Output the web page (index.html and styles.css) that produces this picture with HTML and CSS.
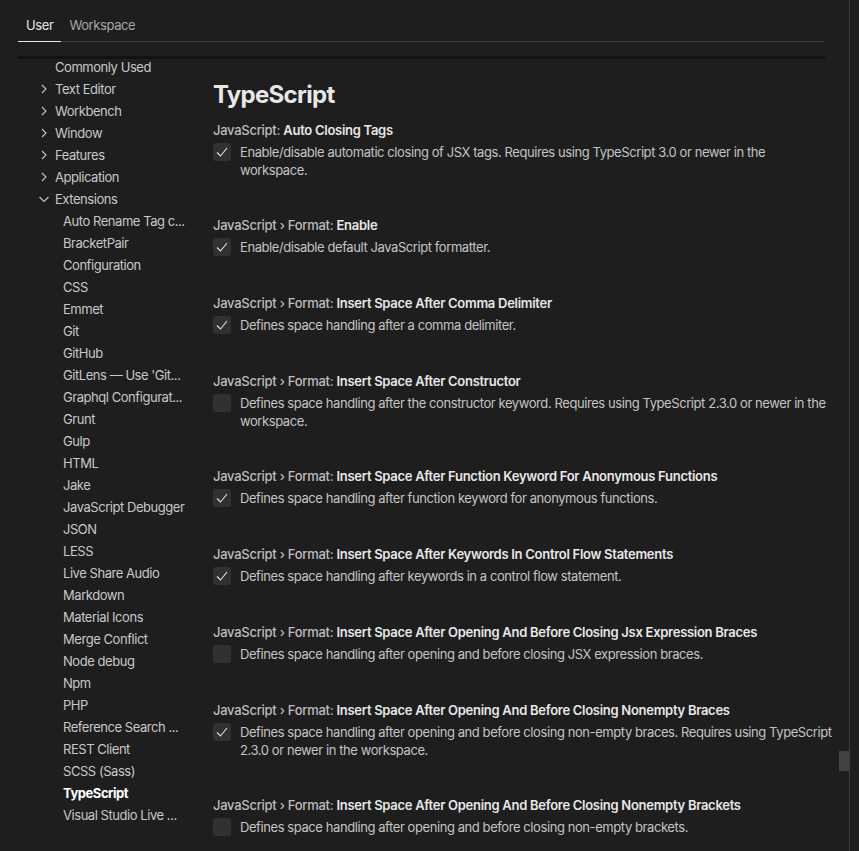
FILE: index.html
```html
<!DOCTYPE html>
<html lang="en">
<head>
<meta charset="utf-8">
<title>Settings</title>
<link rel="stylesheet" href="styles.css">
</head>
<body>
<div class="editor">
  <div class="tabs">
    <div class="tab active">User</div>
    <div class="tab">Workspace</div>
  </div>
  <div class="scroll-shadow"></div>
  <div class="main">
    <nav class="toc">
      <div class="toc-row"><span class="toc-label">Commonly Used</span></div>
      <div class="toc-row"><svg class="chev" viewBox="0 0 16 16"><polyline points="6,4 10,8 6,12"/></svg><span class="toc-label">Text Editor</span></div>
      <div class="toc-row"><svg class="chev" viewBox="0 0 16 16"><polyline points="6,4 10,8 6,12"/></svg><span class="toc-label">Workbench</span></div>
      <div class="toc-row"><svg class="chev" viewBox="0 0 16 16"><polyline points="6,4 10,8 6,12"/></svg><span class="toc-label">Window</span></div>
      <div class="toc-row"><svg class="chev" viewBox="0 0 16 16"><polyline points="6,4 10,8 6,12"/></svg><span class="toc-label">Features</span></div>
      <div class="toc-row"><svg class="chev" viewBox="0 0 16 16"><polyline points="6,4 10,8 6,12"/></svg><span class="toc-label">Application</span></div>
      <div class="toc-row"><svg class="chev" viewBox="0 0 16 16"><polyline points="3.5,6 8,10.5 12.5,6"/></svg><span class="toc-label">Extensions</span></div>
      <div class="toc-row child">Auto Rename Tag c...</div>
      <div class="toc-row child">BracketPair</div>
      <div class="toc-row child">Configuration</div>
      <div class="toc-row child">CSS</div>
      <div class="toc-row child">Emmet</div>
      <div class="toc-row child">Git</div>
      <div class="toc-row child">GitHub</div>
      <div class="toc-row child">GitLens — Use 'Git...</div>
      <div class="toc-row child">Graphql Configurat...</div>
      <div class="toc-row child">Grunt</div>
      <div class="toc-row child">Gulp</div>
      <div class="toc-row child">HTML</div>
      <div class="toc-row child">Jake</div>
      <div class="toc-row child">JavaScript Debugger</div>
      <div class="toc-row child">JSON</div>
      <div class="toc-row child">LESS</div>
      <div class="toc-row child">Live Share Audio</div>
      <div class="toc-row child">Markdown</div>
      <div class="toc-row child">Material Icons</div>
      <div class="toc-row child">Merge Conflict</div>
      <div class="toc-row child">Node debug</div>
      <div class="toc-row child">Npm</div>
      <div class="toc-row child">PHP</div>
      <div class="toc-row child">Reference Search ...</div>
      <div class="toc-row child">REST Client</div>
      <div class="toc-row child">SCSS (Sass)</div>
      <div class="toc-row child selected">TypeScript</div>
      <div class="toc-row child">Visual Studio Live ...</div>
    </nav>
    <section class="settings">
      <h1 class="group-title">TypeScript</h1>

      <div class="setting">
        <div class="label"><span class="cat">JavaScript: </span><span class="name">Auto Closing Tags</span></div>
        <div class="row">
          <span class="checkbox"><svg viewBox="0 0 16 16"><polyline points="3,8.5 6.5,12 13,4"/></svg></span>
          <div class="desc">Enable/disable automatic closing of JSX tags. Requires using TypeScript 3.0 or newer in the workspace.</div>
        </div>
      </div>

      <div class="setting">
        <div class="label"><span class="cat">JavaScript › Format: </span><span class="name">Enable</span></div>
        <div class="row">
          <span class="checkbox"><svg viewBox="0 0 16 16"><polyline points="3,8.5 6.5,12 13,4"/></svg></span>
          <div class="desc">Enable/disable default JavaScript formatter.</div>
        </div>
      </div>

      <div class="setting">
        <div class="label"><span class="cat">JavaScript › Format: </span><span class="name">Insert Space After Comma Delimiter</span></div>
        <div class="row">
          <span class="checkbox"><svg viewBox="0 0 16 16"><polyline points="3,8.5 6.5,12 13,4"/></svg></span>
          <div class="desc">Defines space handling after a comma delimiter.</div>
        </div>
      </div>

      <div class="setting">
        <div class="label"><span class="cat">JavaScript › Format: </span><span class="name">Insert Space After Constructor</span></div>
        <div class="row">
          <span class="checkbox"></span>
          <div class="desc">Defines space handling after the constructor keyword. Requires using TypeScript 2.3.0 or newer in the workspace.</div>
        </div>
      </div>

      <div class="setting">
        <div class="label"><span class="cat">JavaScript › Format: </span><span class="name">Insert Space After Function Keyword For Anonymous Functions</span></div>
        <div class="row">
          <span class="checkbox"><svg viewBox="0 0 16 16"><polyline points="3,8.5 6.5,12 13,4"/></svg></span>
          <div class="desc">Defines space handling after function keyword for anonymous functions.</div>
        </div>
      </div>

      <div class="setting">
        <div class="label"><span class="cat">JavaScript › Format: </span><span class="name">Insert Space After Keywords In Control Flow Statements</span></div>
        <div class="row">
          <span class="checkbox"><svg viewBox="0 0 16 16"><polyline points="3,8.5 6.5,12 13,4"/></svg></span>
          <div class="desc">Defines space handling after keywords in a control flow statement.</div>
        </div>
      </div>

      <div class="setting">
        <div class="label"><span class="cat">JavaScript › Format: </span><span class="name">Insert Space After Opening And Before Closing Jsx Expression Braces</span></div>
        <div class="row">
          <span class="checkbox"></span>
          <div class="desc">Defines space handling after opening and before closing JSX expression braces.</div>
        </div>
      </div>

      <div class="setting">
        <div class="label"><span class="cat">JavaScript › Format: </span><span class="name">Insert Space After Opening And Before Closing Nonempty Braces</span></div>
        <div class="row">
          <span class="checkbox"><svg viewBox="0 0 16 16"><polyline points="3,8.5 6.5,12 13,4"/></svg></span>
          <div class="desc">Defines space handling after opening and before closing non-empty braces. Requires using TypeScript 2.3.0 or newer in the workspace.</div>
        </div>
      </div>

      <div class="setting">
        <div class="label"><span class="cat">JavaScript › Format: </span><span class="name">Insert Space After Opening And Before Closing Nonempty Brackets</span></div>
        <div class="row">
          <span class="checkbox"></span>
          <div class="desc">Defines space handling after opening and before closing non-empty brackets.</div>
        </div>
      </div>
    </section>
  </div>
  <div class="scroll-thumb"></div>
</div>
</body>
</html>
```
FILE: styles.css
```css
html, body {
  margin: 0;
  padding: 0;
  background: #1e1e1e;
  height: 100%;
  overflow: hidden;
}

body {
  font-family: Inter, "Noto Sans", sans-serif;
  font-size: 13px;
  color: #cccccc;
}

.editor {
  position: relative;
  width: 850px;
  height: 851px;
  box-sizing: border-box;
  border-right: 1px solid #3a3a3a;
  overflow: hidden;
}

.tabs {
  display: flex;
  margin-left: 18px;
  width: 807px;
  height: 42px;
  box-sizing: border-box;
  border-bottom: 1px solid #3a3a3a;
}

.tab {
  padding: 16px 8px 0;
  line-height: 18px;
  color: #a8a8a8;
  height: 42px;
  box-sizing: border-box;
  letter-spacing: -0.4px;
}

.tab.active {
  color: #e7e7e7;
  border-bottom: 1px solid #e7e7e7;
}

.scroll-shadow {
  position: absolute;
  left: 18px;
  top: 56px;
  width: 807px;
  height: 3px;
  background: #121212;
}

.main {
  display: flex;
  margin-top: 14px;
}

.toc {
  width: 195px;
  flex-shrink: 0;
  letter-spacing: -0.45px;
}

.toc-row {
  display: flex;
  align-items: center;
  height: 22px;
  padding-left: 55px;
  white-space: nowrap;
  color: #c8c8c8;
  position: relative;
}

.toc-row .chev {
  position: absolute;
  left: 36px;
  top: 3px;
  width: 16px;
  height: 16px;
  fill: none;
  stroke: #c4c4c4;
  stroke-width: 1.1;
}

.toc-row.child {
  padding-left: 63px;
}

.toc-row.selected {
  color: #ffffff;
  font-weight: 700;
}

.settings {
  flex: 1;
  padding-left: 18px;
  padding-right: 15px;
}

.group-title {
  margin: 24px 0 11px;
  font-size: 24px;
  line-height: 30px;
  font-weight: 700;
  color: #e7e7e7;
  letter-spacing: -0.7px;
}

.setting {
  padding-bottom: 37px;
}

.label {
  line-height: 18px;
  white-space: nowrap;
  letter-spacing: -0.28px;
}

.label .cat {
  color: #bdbdbd;
  font-weight: 500;
}

.label .name {
  color: #e7e7e7;
  font-weight: 600;
}

.row {
  display: flex;
  margin-top: 4px;
  min-height: 19px;
}

.checkbox {
  flex-shrink: 0;
  width: 18px;
  height: 18px;
  border-radius: 3px;
  background: #313131;
  margin-right: 9px;
  display: flex;
  align-items: center;
  justify-content: center;
}

.checkbox svg {
  width: 16px;
  height: 16px;
  fill: none;
  stroke: #e0e0e0;
  stroke-width: 1.1;
}

.desc {
  line-height: 18px;
  color: #c4c4c4;
  letter-spacing: -0.42px;
}

.scroll-thumb {
  position: absolute;
  left: 839px;
  top: 751px;
  width: 10px;
  height: 20px;
  background: #424242;
}
```
